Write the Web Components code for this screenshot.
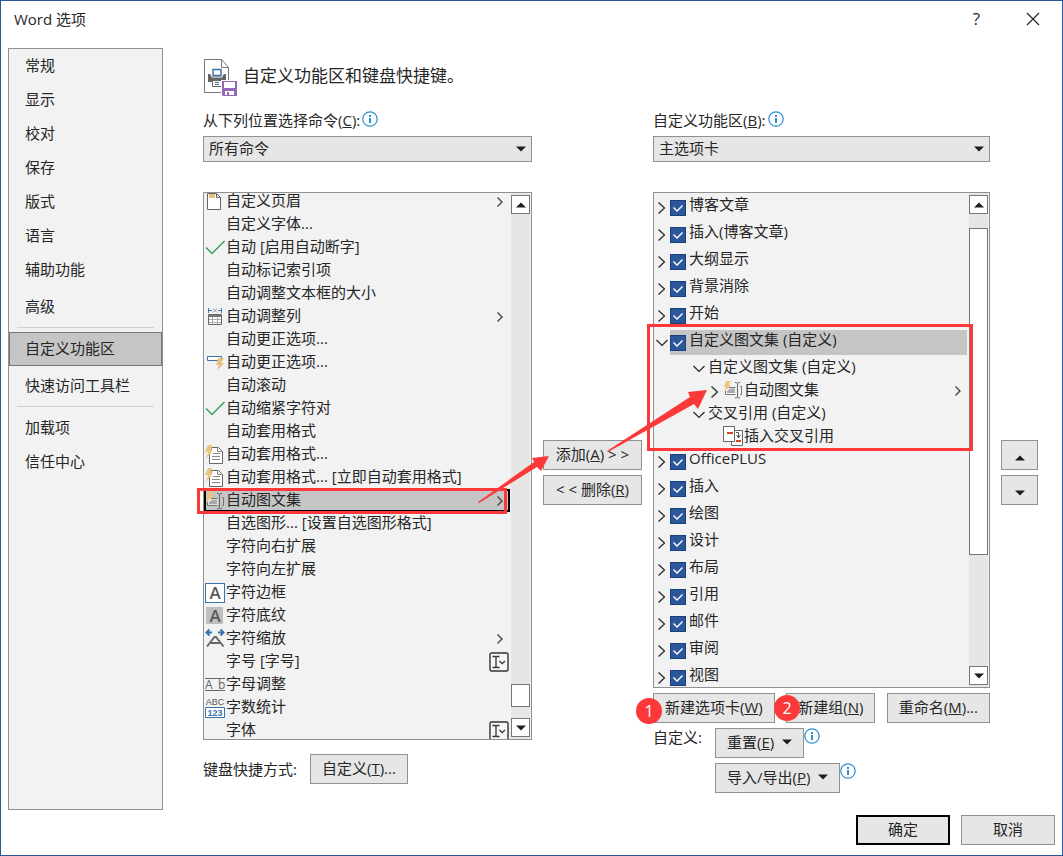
<!DOCTYPE html>
<html lang="zh-CN">
<head>
<meta charset="utf-8">
<meta name="viewport" content="width=device-width, initial-scale=1">
<title>Word 选项</title>
<style>
    body{
        margin: 0;
        font: 15px/20px "Open Sans", "Noto Sans CJK SC", sans-serif;
        color: #262626;
    }
</style>
</head>
<body>
<options-dialog></options-dialog>

<script>
const ICONS = {
    page: [20, 20, `
        <path d="M2.500 1.500h9l4 4v12h-13z" fill="#fff" stroke="#666"/>
        <path d="M11.500 1.500v4h4" fill="none" stroke="#666"/>
        <path d="M4 2h6v4H4z" fill="#e8bf7e"/>`],
    check: [20, 20, `<path d="M1 9.500l6 6L19.500 3" fill="none" stroke="#3f9f5c" stroke-width="1.500"/>`],
    columns: [20, 20, `
        <path d="M3.500 1v5M16.500 1v5M4 3.500h3M13 3.500h3" stroke="#3b74ad" fill="none"/>
        <path d="M8 1.500l4 4M12 1.500l-4 4" stroke="#999" fill="none"/>
        <path d="M3.500 7.500h13v10h-13z" fill="#fff" stroke="#666"/>
        <path d="M4 8h12v2H4z" fill="#777"/>
        <path d="M4 12.500h12M4 15.500h12M7.500 10v7M12.500 10v7" stroke="#aaa"/>`],
    correct: [20, 20, `
        <path d="M2.500 3.500h14v4h-14z" fill="#fff" stroke="#3b74ad"/>
        <path d="M13 5h6l-3 5h3l-7 8 2-6h-3z" fill="#e8bf7e"/>`],
    format: [20, 20, `
        <path d="M6.500 2.500h7l4 4v12h-13v-9z" fill="#fff" stroke="#666"/>
        <path d="M12.500 2.500v4h4M8 8.500h7M7 11.500h8M7 14.500h8" fill="none" stroke="#888"/>
        <path d="M3 0h4L5.500 5H8l-7 9 2-7H0z" fill="#efc47c"/>`],
    autotext: [20, 20, `
        <path d="M6 7.500h6.500v6H3.500v-4z" fill="#fff"/>
        <path d="M6 7.500h6.500M2.500 11v3.500h10M17 6.500h1.500v8H17" fill="none" stroke="#777"/>
        <path d="M7 8.500h5V13H4v-2z" fill="#aaa"/>
        <path d="M12 2.500c2 0 2.500.5 2.500 1.500v12c0 1.500-.5 2-2.500 2M17 2.500c-2 0-2.500.5-2.500 1.500v12c0 1.500.5 2 2.500 2" fill="none" stroke="#666"/>
        <path d="M3 1h5L6 5h2l-7 7 2-5H1z" fill="#efc47c"/>`],
    crossref: [20, 20, `
        <path d="M8.500 4.500h11v15h-11z" fill="#fff" stroke="#666"/>
        <path d="M.500.500h11v15H.500z" fill="#fff" stroke="#666"/>
        <path d="M4 6h6v2H4zM13 14h5v2h-5z" fill="#d24726"/>
        <path d="M13 6.500h2.500v5M13.500 9l2 3 2-3" fill="none" stroke="#555"/>`],
    border: [20, 20, `
        <rect x=".5" y=".5" width="19" height="19" fill="#fff" stroke="#3b74ad"/>
        <text x="10" y="16" text-anchor="middle" font-size="17" font-weight="600" fill="#595959">A</text>`],
    shading: [20, 20, `
        <path d="M1 1h17v17H1z" fill="#bfbfbf"/>
        <text x="10" y="16" text-anchor="middle" font-size="17" font-weight="600" fill="#595959">A</text>`],
    scale: [20, 20, `
        <path d="M2 17.500L9.500 8H11l7.500 9.500M6 14h9" fill="none" stroke="#666" stroke-width="2"/>
        <path d="M2 3.500h5M4.500.500L1.500 3.500l3 3M13 3.500h5M15.500.500l3 3-3 3" fill="none" stroke="#3b74ad" stroke-width="2"/>`],
    adjust: [20, 20, `
        <path d="M0 3.500h20M0 15.500h20" stroke="#666"/>
        <text x="0" y="14" font-size="12" fill="#666">A</text>
        <text x="13" y="14" font-size="12" fill="#666">b</text>`],
    count: [20, 20, `
        <path d="M.500 9.500h19v10H.500z" fill="#fff" stroke="#3b74ad"/>
        <g font-family="Liberation Sans" font-size="9" text-anchor="middle">
            <text x="10" y="7" fill="#555">ABC</text>
            <text x="10" y="18" font-weight="700" fill="#3b74ad">123</text>
        </g>`],
    combo: [20, 20, `
        <rect x="1" y="1" width="18" height="18" rx="1.500" fill="#f7f7f7" stroke="#333" stroke-width="1.400"/>
        <path d="M3.500 4.500H6l1 .8 1-.8h2.500M3.500 15.500H6l1-.8 1 .8h2.500M7 5v10M10.500 9l2.700 2.700L16 9" fill="none" stroke="#333" stroke-width="1.300"/>`],
    right: [10, 12, `<path d="M2.500 1.500L7 6l-4.500 4.500" fill="none" stroke="#444" stroke-width="1.400"/>`],
    closed: [10, 14, `<path d="M1.500 1.500L7.500 7l-6 5.500" fill="none" stroke="#262626" stroke-width="1.200"/>`],
    open: [14, 10, `<path d="M1.500 2L7 7.500 12.500 2" fill="none" stroke="#262626" stroke-width="1.200"/>`],
    up: [10, 6, `<path d="M0 5.500L5 .500l5 5z" fill="#1e1e1e"/>`],
    down: [10, 6, `<path d="M0 .500h10l-5 5z" fill="#1e1e1e"/>`],
    info: [16, 16, `
        <circle cx="8" cy="8" r="7.200" fill="#fff" stroke="#2b8fd0" stroke-width="1.200"/>
        <path d="M7 4h2v2H7zM7 7h2v5H7z" fill="#2b8fd0"/>`],
    close: [14, 14, `<path d="M1 1l12 12M13 1L1 13" stroke="#262626" stroke-width="1.200"/>`],
    customize: [35, 38, `
        <path d="M1.500.500h17l7 8v25h-24z" fill="#fff" stroke="#777"/>
        <path d="M18.500.500v8h7" fill="none" stroke="#777"/>
        <path d="M5 15h3v2h12v-2h3v8H5z" fill="#666"/>
        <path d="M7 15h2v3h10v-3h2" fill="none" stroke="#fff"/>
        <path d="M10 10.500h8v6h-8z" fill="#fff" stroke="#3b74ad" stroke-width="1.500"/>
        <path d="M9.500 21.500h9v6h-9z" fill="#fff" stroke="#666"/>
        <path d="M12 23.500h4M12 25.500h4" stroke="#3b74ad"/>
        <path d="M18 21h17v17H18z" fill="#fff"/>
        <path d="M19 22h15v15H20l-1-1z" fill="#9567b4"/>
        <path d="M21 23h11v6H21zM22 32h9v4h-9z" fill="#fff"/>
        <path d="M24 33h2v3h-2z" fill="#9567b4"/>`],
}

class BaseComponent extends HTMLElement{
    constructor(){
        super();

        this.attachShadow( { mode : "open"} )
    }
    getTemplate(){
        const template = document.createElement('template')
        template.innerHTML = `
            <style>
                *{ box-sizing: border-box; }
                ${this.styles()}
            </style>
            ${this.markup()}
        `

        return template
    }
    styles(){
        return ''
    }
    markup(){
        return '<slot></slot>'
    }
    render(){
        this.shadowRoot.replaceChildren(this.getTemplate().content.cloneNode(true))
    }
    connectedCallback(){
        this.render()
    }
}

class OfficeIcon extends BaseComponent{
    styles(){
        return `
            :host{ display: inline-block; flex: none; line-height: 0; }
            svg{ display: block; overflow: visible; font-family: "Open Sans", sans-serif; }
        `
    }
    markup(){
        const [w, h, shapes] = ICONS[this.getAttribute('name')]
        return `<svg width="${w}" height="${h}" viewBox="0 0 ${w} ${h}" aria-hidden="true">${shapes}</svg>`
    }
}

class OfficeButton extends BaseComponent{
    styles(){
        return `
            :host{ display: flex; flex: none; }
            button{
                flex: 1;
                display: flex;
                align-items: center;
                justify-content: center;
                gap: 8px;
                height: 30px;
                padding: 0 11px 2px;
                border: 1px solid #919191;
                background: #e6e6e6;
                font: inherit;
                color: inherit;
                white-space: nowrap;
            }
            :host([dialog]) button{ width: 94px; }
            :host([move]) button{ width: 37px; padding: 0; }
            :host([default]) button{ border: 2px solid #000; }
        `
    }
    markup(){
        const label = this.getAttribute('label')
        const menu = this.hasAttribute('menu') ? '<office-icon name="down"></office-icon>' : ''
        return `<button type="button" ${label ? `aria-label="${label}"` : ''}><span><slot></slot></span>${menu}</button>`
    }
}

class OfficeSelect extends BaseComponent{
    styles(){
        return `
            :host{ display: block; }
            .caption{
                display: flex;
                align-items: flex-start;
                gap: 2px;
                height: 25px;
            }
            label{ line-height: 18px; }
            .box{ position: relative; }
            select{
                display: block;
                appearance: none;
                width: 100%;
                height: 26px;
                padding: 0 24px 2px 5px;
                border: 1px solid #919191;
                border-radius: 0;
                background: #e6e6e6;
                font: inherit;
                color: inherit;
            }
            .arrow{
                position: absolute;
                right: 6px;
                top: 10px;
                pointer-events: none;
            }
        `
    }
    markup(){
        return `
            <div class="caption">
                <label for="list"><slot></slot></label>
                <office-icon name="info"></office-icon>
            </div>
            <div class="box">
                <select id="list"><option>${this.getAttribute('value')}</option></select>
                <office-icon class="arrow" name="down"></office-icon>
            </div>
        `
    }
}

class ScrollPane extends BaseComponent{
    styles(){
        return `
            :host{
                display: flex;
                min-height: 0;
                border: 1px solid #919191;
                background: #f2f2f2;
                overflow: hidden;
            }
            .view{
                flex: 1;
                min-width: 0;
                overflow: hidden;
            }
            .bar{
                display: flex;
                flex-direction: column;
                width: 19px;
                margin-right: 1px;
                padding: 2px 0;
                background: #e6e6e6;
            }
            button{
                display: grid;
                place-items: center;
                flex: none;
                height: 19px;
                padding: 0;
                border: 1px solid #777;
                background: #fff;
            }
            .before{ flex: ${this.getAttribute('before')}; }
            .thumb{
                flex: ${this.getAttribute('thumb')};
                border: 1px solid #777;
                background: #fff;
            }
            .after{ flex: ${this.getAttribute('after')}; }
        `
    }
    markup(){
        return `
            <div class="view"><slot></slot></div>
            <div class="bar">
                <button type="button" aria-label="向上滚动"><office-icon name="up"></office-icon></button>
                <div class="before"></div>
                <div class="thumb"></div>
                <div class="after"></div>
                <button type="button" aria-label="向下滚动"><office-icon name="down"></office-icon></button>
            </div>
        `
    }
}

class CommandRow extends BaseComponent{
    styles(){
        return `
            :host{
                display: flex;
                align-items: center;
                height: 23px;
                margin-right: 1px;
                padding: 0 1px;
                white-space: nowrap;
            }
            :host([selected]){
                background: #c5c5c5;
                outline: 2px solid #000;
                outline-offset: -2px;
            }
            .icon{ width: 20px; height: 20px; margin-right: 1px; }
            .text{ flex: 1; align-self: flex-start; }
            .right{ margin-right: 4px; }
        `
    }
    markup(){
        const icon = this.getAttribute('icon')
        const end = this.getAttribute('end')
        return `
            <div class="icon">${icon ? `<office-icon name="${icon}"></office-icon>` : ''}</div>
            <div class="text"><slot></slot></div>
            ${end ? `<office-icon class="${end}" name="${end}"></office-icon>` : ''}
        `
    }
}

class CommandList extends BaseComponent{
    styles(){
        return `
            :host{ display: flex; flex-direction: column; }
            scroll-pane{ flex: 1; }
            .rows{ margin-top: -3px; }
        `
    }
    markup(){
        // [text, icon, trailing icon]
        const commands = [
            ['自定义页眉', 'page', 'right'],
            ['自定义字体...'],
            ['自动 [启用自动断字]', 'check'],
            ['自动标记索引项'],
            ['自动调整文本框的大小'],
            ['自动调整列', 'columns', 'right'],
            ['自动更正选项...'],
            ['自动更正选项...', 'correct'],
            ['自动滚动'],
            ['自动缩紧字符对', 'check'],
            ['自动套用格式'],
            ['自动套用格式...', 'format'],
            ['自动套用格式... [立即自动套用格式]', 'format'],
            ['自动图文集', 'autotext', 'right', 'selected'],
            ['自选图形... [设置自选图形格式]'],
            ['字符向右扩展'],
            ['字符向左扩展'],
            ['字符边框', 'border'],
            ['字符底纹', 'shading'],
            ['字符缩放', 'scale', 'right'],
            ['字号 [字号]', '', 'combo'],
            ['字母调整', 'adjust'],
            ['字数统计', 'count'],
            ['字体', '', 'combo'],
        ]
        return `
            <scroll-pane before="472" thumb="21" after="11">
                <div class="rows">
                    ${commands.map(([text, icon = '', end = '', state = '']) =>
                        `<command-row icon="${icon}" end="${end}" ${state}>${text}</command-row>`).join('')}
                </div>
            </scroll-pane>
        `
    }
}

class TreeTab extends BaseComponent{
    styles(){
        return `
            :host{ display: block; }
            .tab{
                display: flex;
                height: 25px;
                margin: 0 2px 2px 0;
            }
            .toggle{
                display: grid;
                place-items: center;
                width: 16px;
                height: 25px;
            }
            .head{ display: flex; flex: 1; }
            :host([selected]) .head{ background: #c5c5c5; }
            label{ line-height: 18px; }
            input{
                appearance: none;
                flex: none;
                width: 16px;
                height: 16px;
                margin: 5px 3px 0 0;
                border: 1px solid #17407c;
                background: #2b579a;
            }
            input:checked::before{
                content: "";
                display: block;
                width: 14px;
                height: 14px;
                background: #fff;
                clip-path: polygon(2px 7px, 3px 6px, 6px 9px, 11px 4px, 12px 5px, 6px 11px);
            }
        `
    }
    markup(){
        const state = this.hasAttribute('selected') ? 'open' : 'closed'
        return `
            <div class="tab">
                <office-icon class="toggle" name="${state}"></office-icon>
                <div class="head">
                    <input type="checkbox" id="tab" checked>
                    <label for="tab">${this.getAttribute('name')}</label>
                </div>
            </div>
            <slot></slot>
        `
    }
}

class TreeItem extends BaseComponent{
    styles(){
        return `
            :host{
                display: flex;
                height: 23px;
                padding-left: 37px;
                white-space: nowrap;
            }
            :host([command]){ padding-left: 53px; }
            .toggle{
                display: grid;
                place-items: center;
                width: 16px;
                height: 23px;
                margin-right: 1px;
            }
            :host([command]) .toggle{ margin-right: 0; }
            .icon{ margin-right: 1px; }
            .text{ flex: 1; line-height: 18px; }
            .right{ margin: 5px 6px 0 0; }
        `
    }
    markup(){
        const toggle = this.getAttribute('toggle')
        const icon = this.getAttribute('icon')
        return `
            <div class="toggle">${toggle ? `<office-icon name="${toggle}"></office-icon>` : ''}</div>
            ${icon ? `<office-icon class="icon" name="${icon}"></office-icon>` : ''}
            <div class="text"><slot></slot></div>
            ${this.hasAttribute('submenu') ? '<office-icon class="right" name="right"></office-icon>' : ''}
        `
    }
}

class RibbonTree extends BaseComponent{
    styles(){
        return `
            :host{ display: flex; flex-direction: column; }
            scroll-pane{ flex: 1; }
            .rows{ padding-top: 2px; }
        `
    }
    markup(){
        const tab = name => `<tree-tab name="${name}"></tree-tab>`
        return `
            <scroll-pane before="14" thumb="327" after="111">
                <div class="rows">
                    ${['博客文章', '插入(博客文章)', '大纲显示', '背景消除', '开始'].map(tab).join('')}
                    <tree-tab name="自定义图文集 (自定义)" selected>
                        <tree-item toggle="open">自定义图文集 (自定义)</tree-item>
                        <tree-item command toggle="closed" icon="autotext" submenu>自动图文集</tree-item>
                        <tree-item toggle="open">交叉引用 (自定义)</tree-item>
                        <tree-item command icon="crossref">插入交叉引用</tree-item>
                    </tree-tab>
                    ${['OfficePLUS', '插入', '绘图', '设计', '布局', '引用', '邮件', '审阅', '视图'].map(tab).join('')}
                </div>
            </scroll-pane>
        `
    }
}

class OptionsNav extends BaseComponent{
    styles(){
        return `
            :host{
                display: block;
                border: 1px solid #919191;
                background: #f2f2f2;
            }
            a{
                display: block;
                height: 34px;
                padding-left: 16px;
                line-height: 32px;
                color: inherit;
                text-decoration: none;
            }
            .gap{ margin-top: 3px; }
            .current{
                padding-left: 15px;
                border: 1px solid #777;
                background: #c5c5c5;
                line-height: 31px;
            }
            hr{
                height: 1px;
                margin: 3px 8px 4px;
                border: 0;
                background: #d0d0d0;
            }
        `
    }
    markup(){
        return `
            <nav>
                <a href="#">常规</a>
                <a href="#">显示</a>
                <a href="#">校对</a>
                <a href="#">保存</a>
                <a href="#">版式</a>
                <a href="#">语言</a>
                <a href="#">辅助功能</a>
                <a href="#" class="gap">高级</a>
                <hr>
                <a href="#" class="current">自定义功能区</a>
                <a href="#" class="gap">快速访问工具栏</a>
                <hr>
                <a href="#">加载项</a>
                <a href="#">信任中心</a>
            </nav>
        `
    }
}

class StepBadge extends BaseComponent{
    styles(){
        return `
            :host{
                position: absolute;
                display: grid;
                place-items: center;
                width: 26px;
                height: 26px;
                border-radius: 50%;
                background: #fc3838;
                color: #fff;
                font-size: 16px;
            }
        `
    }
}

// Red boxes and arrows drawn on top of the dialog
class MarkLayer extends BaseComponent{
    styles(){
        return `
            :host{
                position: absolute;
                inset: -1px;
                pointer-events: none;
            }
            svg{ display: block; }
        `
    }
    markup(){
        return `
            <svg width="100%" height="100%" aria-hidden="true">
                <g fill="none" stroke="#fc3838" stroke-width="3">
                    <rect x="198.500" y="489.500" width="307" height="23"/>
                    <rect x="648.500" y="325.500" width="323" height="124"/>
                </g>
                <g fill="#fc3838">
                    <path d="M478 502L534 462 532 458 549 456 541 471 537 467 479 503z"/>
                    <path d="M607 451L690 397 688 392 707 390 698 409 694 404 608 452z"/>
                </g>
            </svg>
        `
    }
}

class OptionsDialog extends BaseComponent{
    styles(){
        return `
            :host{
                position: relative;
                display: flex;
                flex-direction: column;
                height: 100vh;
                min-height: 640px;
                box-sizing: border-box;
                border: 1px solid #2b579a;
                background: #fff;
            }
            .title{
                display: flex;
                align-items: center;
                height: 37px;
                margin-bottom: 10px;
                padding: 0 22px 2px 13px;
            }
            h1{ flex: 1; margin: 0; font: inherit; }
            .title button{
                padding: 0;
                border: 0;
                background: none;
                font: inherit;
                font-size: 17px;
                color: inherit;
            }
            .title .close{ margin-left: 46px; padding-top: 2px; }
            .body{
                flex: 1;
                display: flex;
                min-height: 0;
                padding-left: 7px;
            }
            options-nav{ flex: none; width: 155px; }
            main{
                flex: 1;
                display: flex;
                flex-direction: column;
                min-width: 0;
                padding: 11px 24px 17px 40px;
            }
            .heading{
                flex: none;
                display: flex;
                gap: 5px;
                height: 52px;
            }
            h2{ margin: 0; font-size: 17px; font-weight: 400; line-height: 34px; }
            .columns{
                flex: 1;
                display: grid;
                grid-template-columns: minmax(0, 329fr) 99px minmax(0, 337fr) 37px;
                grid-template-rows: minmax(0, 1fr);
                gap: 11px;
                min-height: 0;
            }
            .column{
                display: flex;
                flex-direction: column;
                min-height: 0;
            }
            office-select{ margin-bottom: 30px; }
            command-list, ribbon-tree{ flex: 1; min-height: 0; }
            .keys{
                display: flex;
                align-items: center;
                gap: 13px;
                margin: 14px 0 9px;
            }
            .stack{
                display: flex;
                flex-direction: column;
                justify-content: center;
                gap: 5px;
                padding: 82px 0 42px;
            }
            .tabs{
                position: relative;
                display: flex;
                justify-content: space-between;
                margin: 5px 0;
            }
            .first{ left: -17px; top: 5px; }
            .second{ left: 121px; top: 2px; }
            .custom{
                display: grid;
                grid-template-columns: 62px 1fr;
                gap: 5px 0;
            }
            .custom div{ display: flex; grid-column: 2; }
            .custom span{ line-height: 18px; }
            .footer{
                display: flex;
                justify-content: flex-end;
                gap: 11px;
                padding: 5px 7px 10px;
            }
        `
    }
    markup(){
        return `
            <div class="title">
                <h1>Word 选项</h1>
                <button type="button" aria-label="帮助">?</button>
                <button type="button" class="close" aria-label="关闭"><office-icon name="close"></office-icon></button>
            </div>
            <div class="body">
                <options-nav></options-nav>
                <main>
                    <div class="heading">
                        <office-icon name="customize"></office-icon>
                        <h2>自定义功能区和键盘快捷键。</h2>
                    </div>
                    <div class="columns">
                        <div class="column">
                            <office-select value="所有命令">从下列位置选择命令(<u>C</u>):</office-select>
                            <command-list></command-list>
                            <div class="keys">
                                <span>键盘快捷方式:</span>
                                <office-button>自定义(<u>T</u>)...</office-button>
                            </div>
                        </div>
                        <div class="stack">
                            <office-button>添加(<u>A</u>) &gt; &gt;</office-button>
                            <office-button>&lt; &lt; 删除(<u>R</u>)</office-button>
                        </div>
                        <div class="column">
                            <office-select value="主选项卡">自定义功能区(<u>B</u>):</office-select>
                            <ribbon-tree></ribbon-tree>
                            <div class="tabs">
                                <office-button>新建选项卡(<u>W</u>)</office-button>
                                <office-button>新建组(<u>N</u>)</office-button>
                                <office-button>重命名(<u>M</u>)...</office-button>
                                <step-badge class="first">1</step-badge>
                                <step-badge class="second">2</step-badge>
                            </div>
                            <div class="custom">
                                <span>自定义:</span>
                                <div>
                                    <office-button menu>重置(<u>E</u>)</office-button>
                                    <office-icon name="info"></office-icon>
                                </div>
                                <div>
                                    <office-button menu>导入/导出(<u>P</u>)</office-button>
                                    <office-icon name="info"></office-icon>
                                </div>
                            </div>
                        </div>
                        <div class="stack">
                            <office-button move label="上移"><office-icon name="up"></office-icon></office-button>
                            <office-button move label="下移"><office-icon name="down"></office-icon></office-button>
                        </div>
                    </div>
                </main>
            </div>
            <div class="footer">
                <office-button dialog default>确定</office-button>
                <office-button dialog>取消</office-button>
            </div>
            <mark-layer></mark-layer>
        `
    }
}

customElements.define('office-icon', OfficeIcon)
customElements.define('office-button', OfficeButton)
customElements.define('office-select', OfficeSelect)
customElements.define('scroll-pane', ScrollPane)
customElements.define('command-row', CommandRow)
customElements.define('command-list', CommandList)
customElements.define('tree-tab', TreeTab)
customElements.define('tree-item', TreeItem)
customElements.define('ribbon-tree', RibbonTree)
customElements.define('options-nav', OptionsNav)
customElements.define('step-badge', StepBadge)
customElements.define('mark-layer', MarkLayer)
customElements.define('options-dialog', OptionsDialog)
</script>
</body>
</html>
